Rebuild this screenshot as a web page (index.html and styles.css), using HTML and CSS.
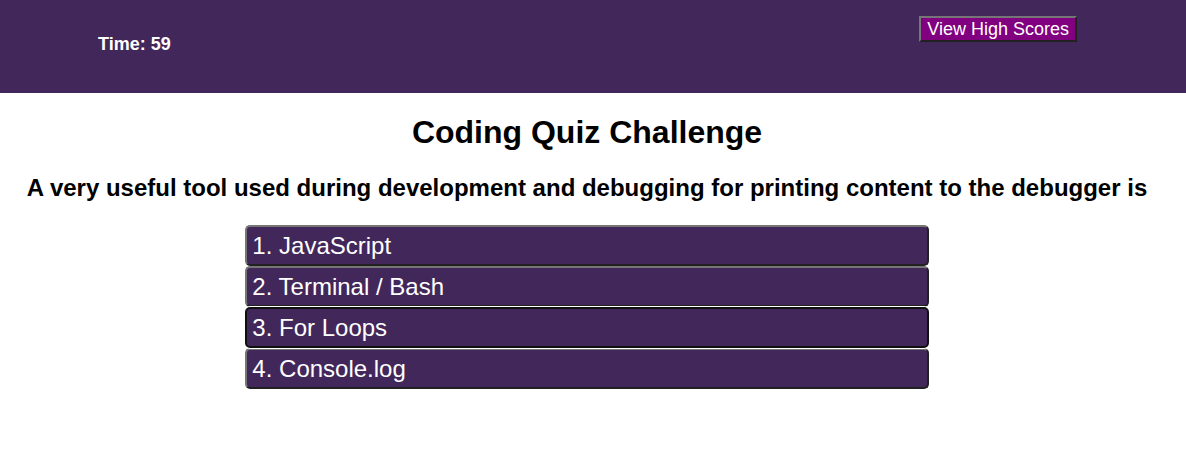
FILE: index.html
```html
<!DOCTYPE html>
<html lang="en">
<head>
<meta charset="utf-8">
<title>Coding Quiz Challenge</title>
<link rel="stylesheet" href="styles.css">
</head>
<body>
<header class="topbar">
  <p class="timer">Time: <span>59</span></p>
  <button type="button" class="scores">View High Scores</button>
</header>
<main class="quiz">
  <h1 class="title">Coding Quiz Challenge</h1>
  <h2 class="question">A very useful tool used during development and debugging for printing content to the debugger is</h2>
  <div class="answers">
    <button type="button" class="answer">1. JavaScript</button>
    <button type="button" class="answer">2. Terminal / Bash</button>
    <button type="button" class="answer active">3. For Loops</button>
    <button type="button" class="answer">4. Console.log</button>
  </div>
</main>
</body>
</html>
```
FILE: styles.css
```css
* {
  box-sizing: border-box;
}

body {
  margin: 0;
  background: #fff;
  color: #000;
  font-family: "Liberation Sans", Arial, sans-serif;
}

.topbar {
  display: flex;
  justify-content: space-between;
  align-items: flex-start;
  padding: 16px 109px 32px 98px;
  background: #42275b;
  color: #fff;
}

.timer {
  margin: 18px 0 6px;
  font-size: 18px;
  line-height: 21px;
  font-weight: bold;
}

.scores {
  padding: 1px 6px;
  border: 2px outset #767676;
  background: #800080;
  color: #fff;
  font-family: inherit;
  font-size: 18px;
  line-height: 20px;
}

.quiz {
  padding: 21px 12px 32px 0;
  text-align: center;
}

.title {
  margin: 0 0 23px;
  font-size: 32px;
  line-height: 37px;
}

.question {
  margin: 0 0 23px;
  font-size: 24px;
  line-height: 28px;
}

.answers {
  display: flex;
  flex-direction: column;
  width: 58.2%;
  margin: 0 auto;
}

.answer {
  padding: 5px;
  border: 2px outset #767676;
  border-radius: 5px;
  background: #42275b;
  color: #fff;
  font-family: inherit;
  font-size: 24px;
  line-height: 27px;
  text-align: left;
}

/* Selected answer: dark frame with a thin light ring around it */
.answer.active {
  z-index: 1;
  border: 2px solid #101010;
  box-shadow: 0 0 0 1px #fff;
}
```
